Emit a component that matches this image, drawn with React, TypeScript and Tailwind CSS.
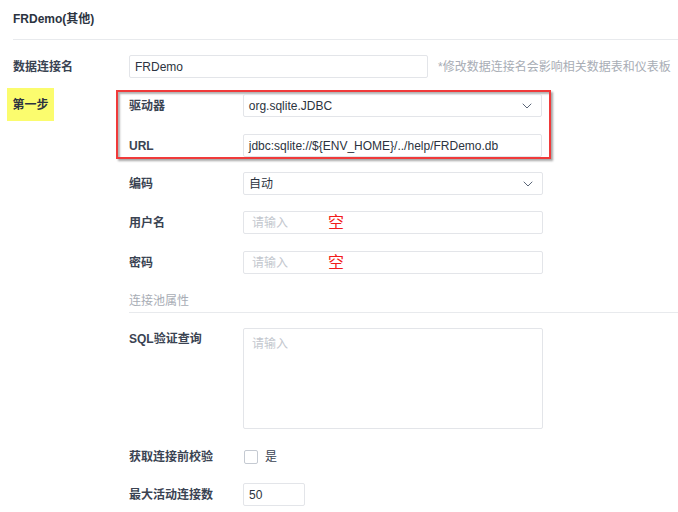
import React from "react";
import { ChevronDown } from "lucide-react";

const font = "font-['Liberation_Sans','Noto_Sans_CJK_SC',sans-serif]";

function Select({ value }: { value: string }) {
  return (
    <div className="flex h-[23px] w-[300px] items-center justify-between rounded-[2px] border border-[#e3e5e9] pl-[5px] pr-[6px] text-[12px] text-[#2c3340]">
      <span>{value}</span>
      <ChevronDown size={16} strokeWidth={1.5} className="text-[#5b6678]" />
    </div>
  );
}

function Input({ value, placeholder, width = "w-[300px]", mark }: { value?: string; placeholder?: string; width?: string; mark?: boolean }) {
  return (
    <div className={`flex h-[23px] ${width} items-center rounded-[2px] border border-[#e3e5e9] pl-[5px] text-[12px]`}>
      {value ? (
        <span className="text-[#2c3340]">{value}</span>
      ) : (
        <span className="pl-[3px] text-[#c3c7ce]">{placeholder}</span>
      )}
      {mark && <span className="ml-[40px] text-[16px] leading-none text-[#f21c1c]">空</span>}
    </div>
  );
}

function Row({ label, children, className = "" }: { label: string; children: React.ReactNode; className?: string }) {
  return (
    <div className={`flex items-center ${className}`}>
      <div className="w-[114px] text-[12px] font-semibold text-[#3a4352]">{label}</div>
      {children}
    </div>
  );
}

export default function App() {
  return (
    <div className={`${font} h-[512px] w-[678px] overflow-hidden bg-white pl-[13px]`}>
      <div className="flex h-[40px] items-center border-b border-[#e8eaed] pb-[2px] text-[12px] font-bold text-[#2c3340]">
        FRDemo(其他)
      </div>

      <div className="mt-[15px] flex items-center">
        <div className="w-[116px] text-[12px] font-semibold text-[#3a4352]">数据连接名</div>
        <Input value="FRDemo" width="w-[299px]" />
        <span className="ml-[10px] text-[12px] text-[#a8adb5]">*修改数据连接名会影响相关数据表和仪表板</span>
      </div>

      <div className="flex">
        <div className="w-[103px] pt-[10px]">
          <div className="-ml-[6px] flex h-[33px] w-[47px] items-center justify-center bg-[#fbfc6e] text-[12px] font-semibold text-[#2c3340]">
            第一步
          </div>
        </div>
        <div className="flex-1">
          <div className="mt-[12px] w-[435px] border-2 border-[#f03a3a] pb-[0px] pl-[11px] pr-[7px] pt-[2px] shadow-[2px_2px_2px_rgba(0,0,0,0.35),inset_2px_2px_2px_rgba(0,0,0,0.3)]">
            <Row label="驱动器">
              <Select value="org.sqlite.JDBC" />
            </Row>
            <Row label="URL" className="mt-[17px]">
              <Input value="jdbc:sqlite://${ENV_HOME}/../help/FRDemo.db" />
            </Row>
          </div>
          <div className="pl-[13px]">
            <Row label="编码" className="mt-[13px]">
              <Select value="自动" />
            </Row>
            <Row label="用户名" className="mt-[16px]">
              <Input placeholder="请输入" mark />
            </Row>
            <Row label="密码" className="mt-[17px]">
              <Input placeholder="请输入" mark />
            </Row>
            <div className="mt-[16px] flex h-[23px] items-center border-b border-[#e8eaed] text-[12px] text-[#a8adb5]">
              连接池属性
            </div>
            <div className="mt-[15px] flex items-start">
              <div className="w-[114px] pt-[2px] text-[12px] font-semibold text-[#3a4352]">SQL验证查询</div>
              <div className="h-[101px] w-[300px] rounded-[2px] border border-[#e3e5e9] pl-[8px] pt-[6px] text-[12px] text-[#c3c7ce]">
                请输入
              </div>
            </div>
            <Row label="获取连接前校验" className="mt-[16px] h-[23px]">
              <div className="ml-[1px] h-[14px] w-[14px] rounded-[2px] border border-[#c5cad2]" />
              <span className="ml-[7px] text-[12px] text-[#3a4352]">是</span>
            </Row>
            <Row label="最大活动连接数" className="mt-[15px]">
              <Input value="50" width="w-[62px]" />
            </Row>
          </div>
        </div>
      </div>
    </div>
  );
}
